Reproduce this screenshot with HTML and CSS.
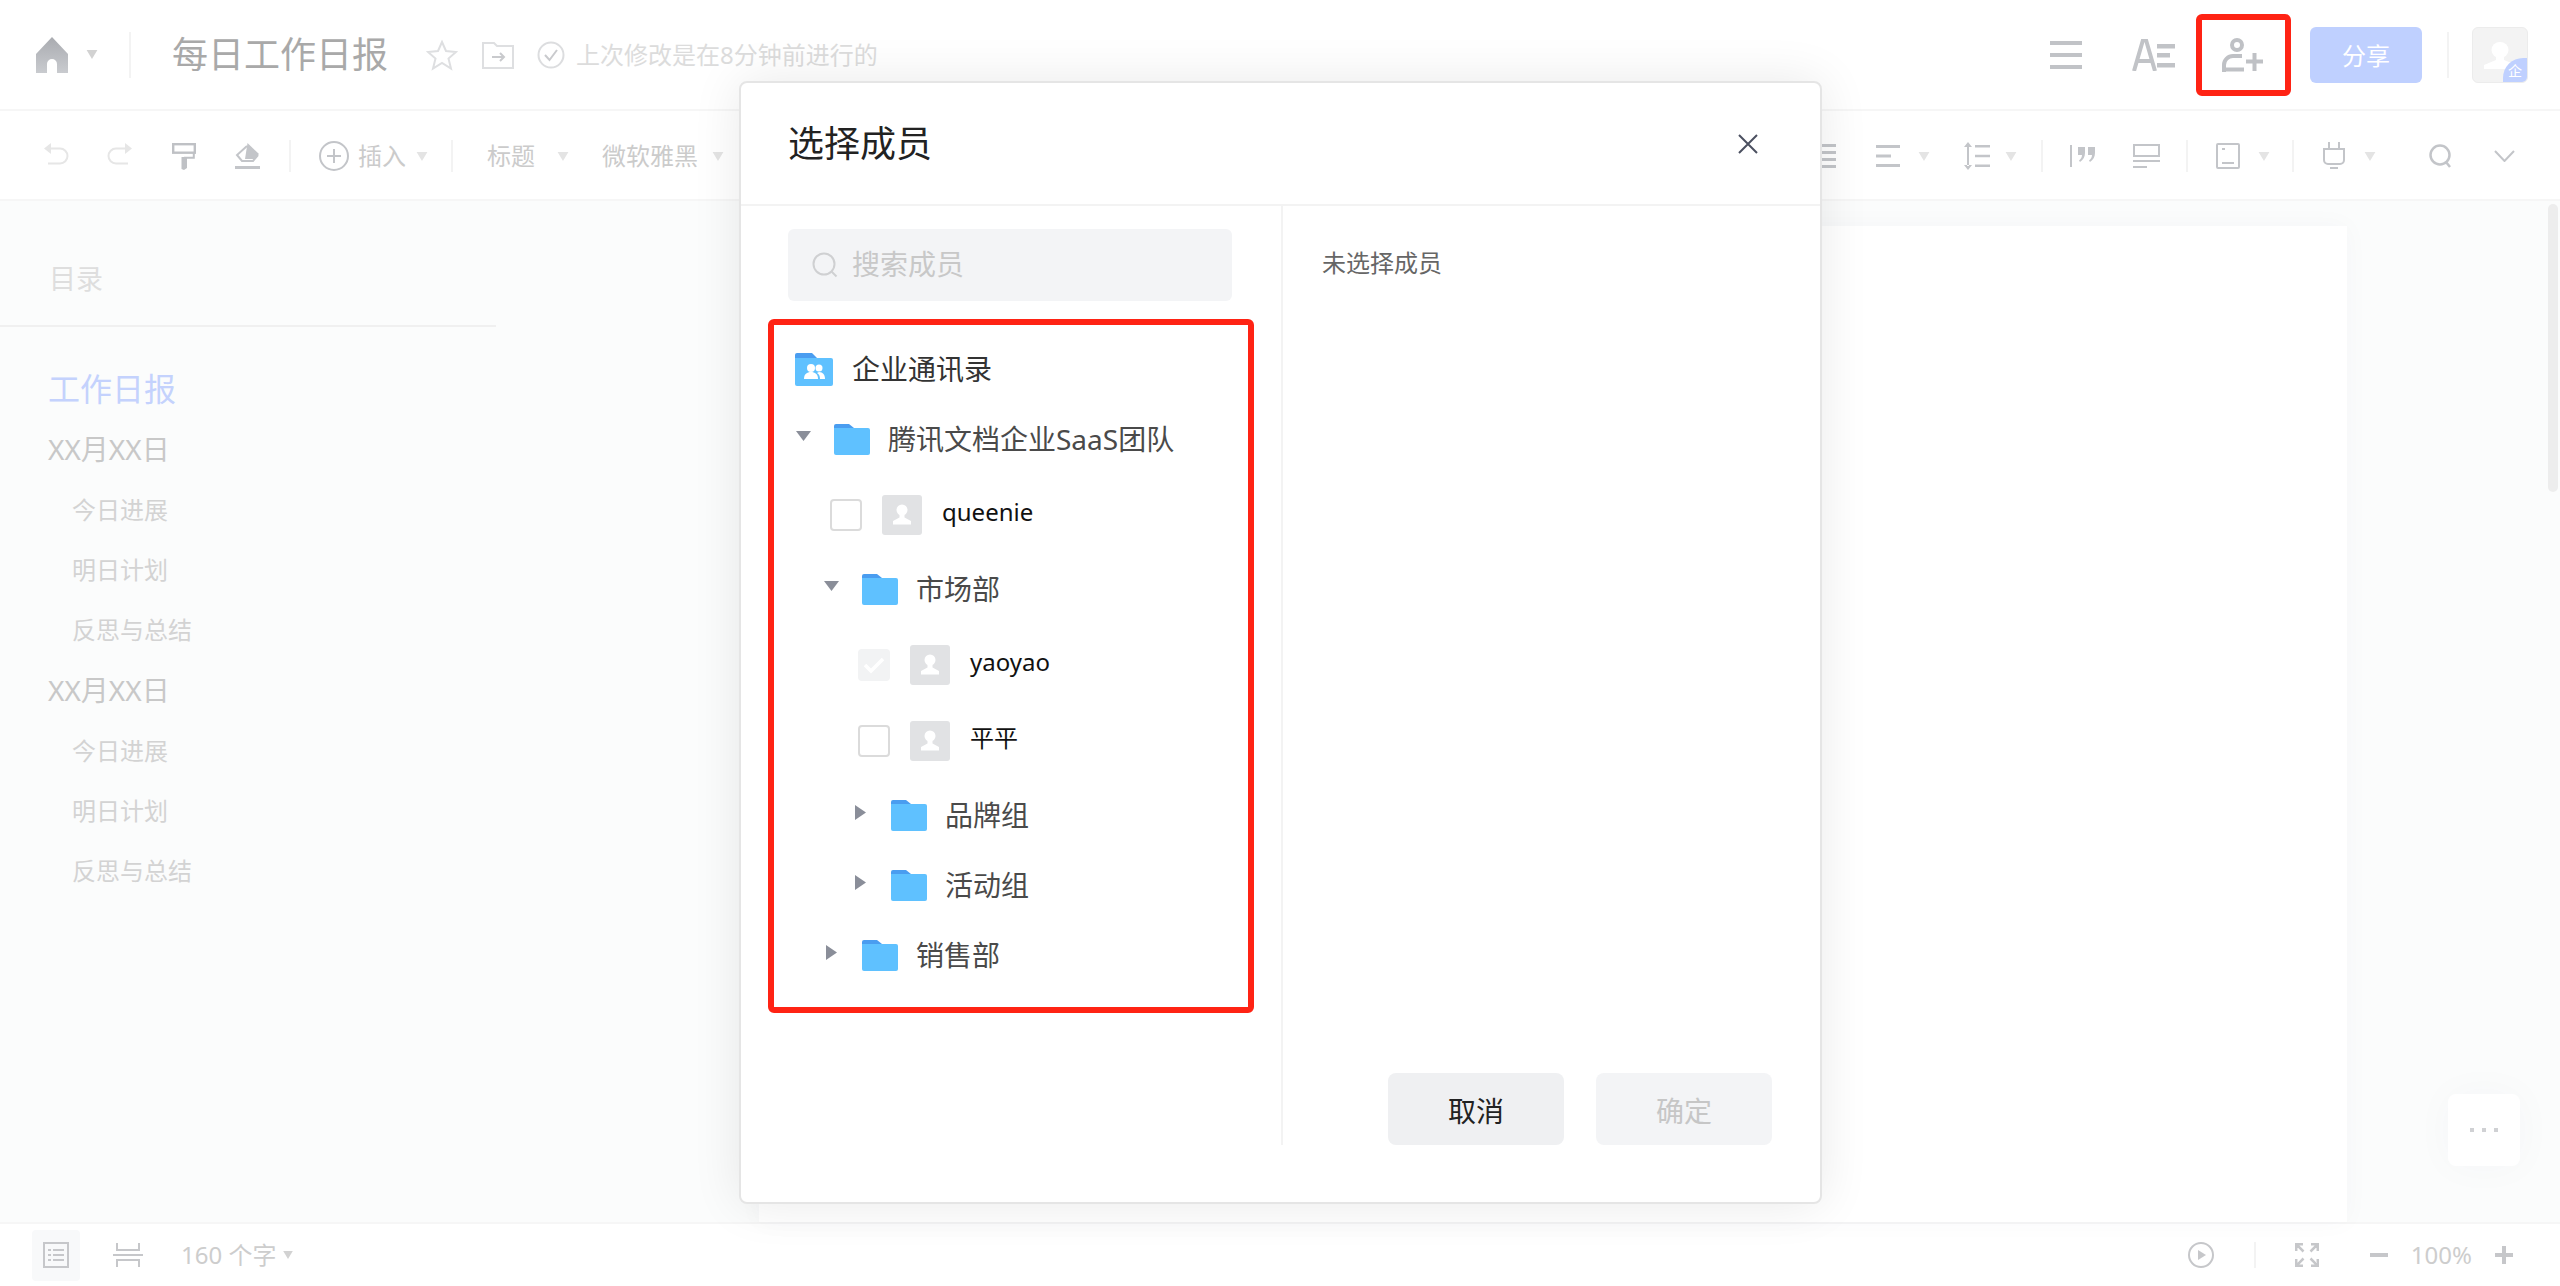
FILE: index.html
```html
<!DOCTYPE html>
<html lang="zh-CN">
  <head>
    <meta charset="UTF-8">
    <title>每日工作日报</title>
    <link rel="stylesheet" href="styles.css">
  </head>
  <body>
    <svg class="defs" width="0" height="0">
      <symbol id="folder" viewBox="0 0 36 31">
        <path fill="#4a9df0" d="M0 2a2 2 0 0 1 2-2h13l5 4H0z"/>
        <path fill="#5fc1ff" d="M0 4h34a2 2 0 0 1 2 2v23a2 2 0 0 1-2 2H2a2 2 0 0 1-2-2z"/>
      </symbol>
      <symbol id="person" viewBox="0 0 40 40">
        <circle cx="20" cy="15" r="5.5" fill="#fff"/>
        <path fill="#fff" d="M17.5 20h5v2.500l6.500 3.500v3.500H11V26l6.500-3.500z"/>
      </symbol>
      <symbol id="caret" viewBox="0 0 12 10">
        <path fill="currentColor" d="M0 0h12L6 10z"/>
      </symbol>
    </svg>

    <div class="app">
      <header class="topbar">
        <div class="row">
          <svg class="home" width="32" height="36" viewBox="0 0 32 36">
            <defs>
              <linearGradient id="homefill" x1="0" y1="0" x2="0" y2="1">
                <stop offset="0" stop-color="#a9abb0"/>
                <stop offset="1" stop-color="#c9cbcf"/>
              </linearGradient>
            </defs>
            <path fill="url(#homefill)" d="M16 0l16 17v19H21v-9a5 5 0 0 0-10 0v9H0V17z"/>
          </svg>
          <svg class="caret dark ml-18" width="12" height="9"><use href="#caret"/></svg>
          <span class="sep tall ml-31"></span>
          <h1 class="doc-title ml-41">每日工作日报</h1>
          <svg class="ml-38" width="32" height="32" viewBox="0 0 32 32">
            <path fill="none" stroke="#dedfe1" stroke-width="2" d="M16 3l4 9 10 1-7.500 6.500 2.500 10-9-5.500-9 5.500 2.500-10L2 13l10-1z"/>
          </svg>
          <svg class="ml-24" width="32" height="28" viewBox="0 0 32 28">
            <path fill="none" stroke="#dedfe1" stroke-width="2" d="M1 2h11l3 3h16v22H1z"/>
            <path fill="none" stroke="#c9cacd" stroke-width="2" d="M10 16h12M18 12l4 4-4 4"/>
          </svg>
          <svg class="ml-23" width="28" height="28" viewBox="0 0 28 28">
            <circle cx="14" cy="14" r="12.500" fill="none" stroke="#dcdddf" stroke-width="2"/>
            <path fill="none" stroke="#c9cacd" stroke-width="2" d="M8 14l4.500 5L20 9"/>
          </svg>
          <span class="save-note ml-11">上次修改是在8分钟前进行的</span>
        </div>
        <div class="row">
          <svg width="32" height="28" viewBox="0 0 32 28">
            <path fill="#c1c3c7" d="M0 0h32v4H0zM0 12h32v4H0zM0 24h32v4H0z"/>
          </svg>
          <svg class="ml-50" width="43" height="32" viewBox="0 0 43 32">
            <path fill="none" stroke="#c1c3c7" stroke-width="4" d="M2 32L11 1h3l9 31M5 22h15"/>
            <path fill="#c1c3c7" d="M25 5h18v4.500H25zM25 14h13v4.500H25zM25 24h18v4.500H25z"/>
          </svg>
          <svg class="ml-47" width="41" height="34" viewBox="0 0 41 34">
            <circle cx="15" cy="7" r="5" fill="none" stroke="#bfc1c5" stroke-width="4"/>
            <path fill="none" stroke="#bfc1c5" stroke-width="4" d="M2 34V27a9 9 0 0 1 9-9h9M2 31.500h20"/>
            <path fill="#bfc1c5" d="M24 21.500h17v4H24zM30.500 15h4v18h-4z"/>
          </svg>
          <button class="share ml-47">分享</button>
          <span class="sep tall ml-25"></span>
          <div class="me ml-23">
            <svg width="56" height="56" viewBox="0 0 56 56">
              <ellipse cx="28" cy="23" rx="8.500" ry="8" fill="#fff"/>
              <path fill="#fff" d="M24 29h8v4l12 5v4H12v-4l12-5z"/>
            </svg>
            <span class="me-badge">企</span>
          </div>
        </div>
      </header>

      <nav class="toolbar">
        <div class="row">
          <svg width="26" height="26" viewBox="0 0 26 26">
            <path fill="#e6e6e6" d="M8 0v11L1 5.500z"/>
            <path fill="none" stroke="#e6e6e6" stroke-width="2" d="M6 5.500h11a7.500 7.500 0 0 1 0 15H5"/>
          </svg>
          <svg class="ml-38" width="26" height="26" viewBox="0 0 26 26">
            <path fill="#e6e6e6" d="M18 0v11l7-5.500z"/>
            <path fill="none" stroke="#e6e6e6" stroke-width="2" d="M20 5.500H9a7.500 7.500 0 0 0 0 15h12"/>
          </svg>
          <svg class="ml-39" width="24" height="27" viewBox="0 0 24 27">
            <rect x="1.200" y="1.200" width="21.600" height="8.500" fill="none" stroke="#bfc1c5" stroke-width="2.400"/>
            <path fill="none" stroke="#bfc1c5" stroke-width="2" d="M21.800 9.700v5H12"/>
            <path fill="#bfc1c5" d="M9.500 14h5.500v11l-3 2-2.500-1z"/>
          </svg>
          <svg class="ml-39" width="25" height="26" viewBox="0 0 25 26">
            <path fill="#c3c5c9" d="M12.500 0L24 11l-5 5h-9z"/>
            <path fill="none" stroke="#c3c5c9" stroke-width="2" d="M12 3L2 12l5 6h11l5-6"/>
            <path fill="#c3c5c9" d="M0 23h25v3H0z"/>
          </svg>
          <span class="sep ml-29"></span>
          <svg class="ml-28" width="30" height="30" viewBox="0 0 30 30">
            <circle cx="15" cy="15" r="14" fill="none" stroke="#c3c5c9" stroke-width="2"/>
            <path fill="none" stroke="#c3c5c9" stroke-width="2" d="M15 8v14M8 15h14"/>
          </svg>
          <span class="tool-text ml-9">插入</span>
          <svg class="caret ml-10" width="12" height="9"><use href="#caret"/></svg>
          <span class="sep ml-23"></span>
          <span class="tool-text ml-34">标题</span>
          <svg class="caret ml-22" width="12" height="9"><use href="#caret"/></svg>
          <span class="tool-text ml-33">微软雅黑</span>
          <svg class="caret ml-14" width="12" height="9"><use href="#caret"/></svg>
        </div>
        <div class="row">
          <svg width="22" height="24" viewBox="0 0 22 24">
            <path fill="#c3c5c9" d="M0 0h22v3H0zM0 7h22v3H0zM0 14h22v3H0zM0 21h22v3H0z"/>
          </svg>
          <svg class="ml-40" width="24" height="22" viewBox="0 0 24 22">
            <path fill="#c3c5c9" d="M0 0h24v3H0zM0 9.500h15v3H0zM0 19h24v3H0z"/>
          </svg>
          <svg class="caret ml-18" width="12" height="9"><use href="#caret"/></svg>
          <svg class="ml-34" width="26" height="28" viewBox="0 0 26 28">
            <path fill="#c3c5c9" d="M4 0l4 5H0zM4 28l4-5H0zM3 4h2v20H3zM11 3h15v2.500H11zM11 12.800h15v2.500H11zM11 22.500h15v2.500H11z"/>
          </svg>
          <svg class="caret ml-15" width="12" height="9"><use href="#caret"/></svg>
          <span class="sep ml-24"></span>
          <svg class="ml-27" width="26" height="22" viewBox="0 0 26 22">
            <path fill="#c3c5c9" d="M0 0h2v22H0zM8 2h7v6c0 4-2 7-5 9l-1-1.500c2-1.500 3-3.500 3-5.500H8zM18 2h7v6c0 4-2 7-5 9l-1-1.500c2-1.500 3-3.500 3-5.500h-4z"/>
          </svg>
          <svg class="ml-37" width="27" height="24" viewBox="0 0 27 24">
            <path fill="none" stroke="#c3c5c9" stroke-width="2" d="M1 1h25v11H1z"/>
            <path fill="#c3c5c9" d="M0 16h27v2H0zM0 22h14v2H0z"/>
          </svg>
          <span class="sep ml-26"></span>
          <svg class="ml-28" width="24" height="26" viewBox="0 0 24 26">
            <rect x="1" y="1" width="22" height="24" rx="1" fill="none" stroke="#c3c5c9" stroke-width="2"/>
            <path fill="#c3c5c9" d="M6 19h12v2H6zM6 5h3v2H6z"/>
          </svg>
          <svg class="caret ml-18" width="12" height="9"><use href="#caret"/></svg>
          <span class="sep ml-22"></span>
          <svg class="ml-28" width="24" height="28" viewBox="0 0 24 28">
            <path fill="none" stroke="#c3c5c9" stroke-width="2" d="M7 0v7M17 0v7M2 7h20v11a4 4 0 0 1-4 4H6a4 4 0 0 1-4-4z"/>
            <path fill="#c3c5c9" d="M8 25h8v2H8z"/>
          </svg>
          <svg class="caret ml-18" width="12" height="9"><use href="#caret"/></svg>
          <svg class="ml-53" width="23" height="24" viewBox="0 0 23 24">
            <circle cx="11" cy="11" r="9.500" fill="none" stroke="#c3c5c9" stroke-width="2.500"/>
            <path fill="none" stroke="#c3c5c9" stroke-width="2.500" d="M17 18l4 5"/>
          </svg>
          <svg class="ml-42" width="21" height="12" viewBox="0 0 21 12">
            <path fill="none" stroke="#c3c5c9" stroke-width="2" d="M1 1l9.500 10L20 1"/>
          </svg>
        </div>
      </nav>

      <main class="workspace">
        <aside class="toc">
          <div class="toc-head">目录</div>
          <ul class="toc-list">
            <li class="toc-h1">工作日报</li>
            <li class="toc-h2">XX月XX日</li>
            <li class="toc-h3">今日进展</li>
            <li class="toc-h3">明日计划</li>
            <li class="toc-h3">反思与总结</li>
            <li class="toc-h2">XX月XX日</li>
            <li class="toc-h3">今日进展</li>
            <li class="toc-h3">明日计划</li>
            <li class="toc-h3">反思与总结</li>
          </ul>
        </aside>
        <section class="canvas">
          <div class="paper"></div>
        </section>
        <div class="scroll-thumb"></div>
        <div class="more-card">
          <span></span><span></span><span></span>
        </div>
      </main>

      <footer class="statusbar">
        <div class="row">
          <div class="outline-btn">
            <svg width="26" height="26" viewBox="0 0 26 26">
              <rect x="1" y="1" width="24" height="24" fill="none" stroke="#c6c7ca" stroke-width="2"/>
              <path fill="#c6c7ca" d="M5 7h3v2H5zM10 7h11v2H10zM5 12h3v2H5zM10 12h11v2H10zM5 17h3v2H5zM10 17h11v2H10z"/>
            </svg>
          </div>
          <svg class="ml-33" width="30" height="24" viewBox="0 0 30 24">
            <path fill="#c6c7ca" d="M3 0h2v6h20V0h2v8H3zM0 11h30v2H0zM3 16h24v8h-2v-6H5v6H3z"/>
          </svg>
          <span class="count ml-38">160 个字</span>
          <svg class="caret dark ml-6" width="12" height="8"><use href="#caret"/></svg>
        </div>
        <div class="row">
          <svg width="26" height="26" viewBox="0 0 26 26">
            <circle cx="13" cy="13" r="12" fill="none" stroke="#c6c7ca" stroke-width="2"/>
            <path fill="#c6c7ca" d="M10 8l8 5-8 5z"/>
          </svg>
          <span class="sep short ml-40"></span>
          <svg class="ml-39" width="24" height="24" viewBox="0 0 24 24">
            <path fill="none" stroke="#c6c7ca" stroke-width="2.500" d="M1.200 8V1.200H8M1.200 1.200l7.300 7.300M22.800 8V1.200H16M22.800 1.200l-7.300 7.300M1.200 16v6.800H8M1.200 22.800l7.300-7.300M22.800 16v6.800H16M22.800 22.800l-7.300-7.300"/>
          </svg>
          <svg class="ml-51" width="18" height="4"><rect width="18" height="4" fill="#c6c7ca"/></svg>
          <span class="count ml-23">100%</span>
          <svg class="ml-23" width="18" height="18" viewBox="0 0 18 18">
            <path fill="#c6c7ca" d="M0 7h18v4H0zM7 0h4v18H7z"/>
          </svg>
        </div>
      </footer>
    </div>

    <div class="dialog">
      <div class="dialog-head">
        <h2 class="dialog-title">选择成员</h2>
        <svg class="dialog-close" width="20" height="20" viewBox="0 0 20 20">
          <path fill="none" stroke="#4b5060" stroke-width="2" d="M1 1l18 18M19 1L1 19"/>
        </svg>
      </div>
      <div class="dialog-body">
        <div class="picker">
          <div class="search">
            <svg width="26" height="26" viewBox="0 0 26 26">
              <circle cx="12" cy="12" r="10.500" fill="none" stroke="#cfd0d2" stroke-width="2"/>
              <path fill="none" stroke="#cfd0d2" stroke-width="2" d="M19.500 19.500l5 5"/>
            </svg>
            <span>搜索成员</span>
          </div>
          <div class="tree">
            <div class="tree-mark"></div>
            <div class="tree-row root">
              <svg width="38" height="33" viewBox="0 0 38 33">
                <path fill="#4a9df0" d="M0 2a2 2 0 0 1 2-2h15l5 5H0z"/>
                <path fill="#5fc1ff" d="M0 5h36a2 2 0 0 1 2 2v24a2 2 0 0 1-2 2H2a2 2 0 0 1-2-2z"/>
                <circle cx="16" cy="15" r="4" fill="#fff"/>
                <path fill="#fff" d="M9 26c0-5 3-7 7-7s7 2 7 7z"/>
                <circle cx="24" cy="15" r="3.500" fill="#fff"/>
                <path fill="#fff" d="M24 19c4 0 6 3 6 7h-5c0-3-1-5-3-6z"/>
              </svg>
              <span class="root-label">企业通讯录</span>
            </div>
            <div class="tree-row level-1">
              <svg class="arrow" width="16" height="12" viewBox="0 0 16 12"><path fill="#8a8e99" d="M0 0h15L7.500 10z"/></svg>
              <svg width="36" height="31"><use href="#folder"/></svg>
              <span class="folder-label">腾讯文档企业SaaS团队</span>
            </div>
            <div class="members level-1">
              <div class="member">
                <span class="check"></span>
                <svg class="avatar" width="40" height="40"><use href="#person"/></svg>
                <span class="member-name">queenie</span>
              </div>
            </div>
            <div class="tree-row level-2">
              <svg class="arrow" width="16" height="12" viewBox="0 0 16 12"><path fill="#8a8e99" d="M0 0h15L7.500 10z"/></svg>
              <svg width="36" height="31"><use href="#folder"/></svg>
              <span class="folder-label">市场部</span>
            </div>
            <div class="members level-2">
              <div class="member">
                <span class="check checked">
                  <svg width="32" height="32" viewBox="0 0 32 32">
                    <path fill="none" stroke="#fff" stroke-width="3.500" d="M7 16l6 6 12-12"/>
                  </svg>
                </span>
                <svg class="avatar" width="40" height="40"><use href="#person"/></svg>
                <span class="member-name">yaoyao</span>
              </div>
              <div class="member">
                <span class="check"></span>
                <svg class="avatar" width="40" height="40"><use href="#person"/></svg>
                <span class="member-name">平平</span>
              </div>
            </div>
            <div class="tree-row level-3">
              <svg class="arrow side" width="16" height="16" viewBox="0 0 16 16"><path fill="#8a8e99" d="M2 0l11 7.500L2 15z"/></svg>
              <svg width="36" height="31"><use href="#folder"/></svg>
              <span class="folder-label">品牌组</span>
            </div>
            <div class="tree-row level-3">
              <svg class="arrow side" width="16" height="16" viewBox="0 0 16 16"><path fill="#8a8e99" d="M2 0l11 7.500L2 15z"/></svg>
              <svg width="36" height="31"><use href="#folder"/></svg>
              <span class="folder-label">活动组</span>
            </div>
            <div class="tree-row level-2">
              <svg class="arrow side" width="16" height="16" viewBox="0 0 16 16"><path fill="#8a8e99" d="M2 0l11 7.500L2 15z"/></svg>
              <svg width="36" height="31"><use href="#folder"/></svg>
              <span class="folder-label">销售部</span>
            </div>
          </div>
        </div>
        <div class="selected">
          <p class="none-selected">未选择成员</p>
          <div class="dialog-actions">
            <button class="btn">取消</button>
            <button class="btn disabled">确定</button>
          </div>
        </div>
      </div>
    </div>

    <div class="action-mark"></div>
  </body>
</html>
```

FILE: styles.css
```css
* {
  box-sizing: border-box;
}

html, body {
  margin: 0;
  height: 100%;
  overflow: hidden;
}

body {
  font-family: "Noto Sans", "Noto Sans CJK SC", sans-serif;
  line-height: 1;
  background: #fff;
}

h1, h2, p, ul {
  margin: 0;
  padding: 0;
  font-weight: 400;
}

button {
  font-family: inherit;
  border: 0;
  padding: 0;
}

svg {
  display: block;
  flex: none;
}

.defs {
  position: absolute;
}

.app {
  display: flex;
  flex-direction: column;
  height: 1286px;
}

.row {
  display: flex;
  align-items: center;
}

.caret {
  color: #e4e4e4;
}

.caret.dark {
  color: #d2d2d2;
}

/* spacing between toolbar items */
.ml-6 { margin-left: 6px; }
.ml-9 { margin-left: 9px; }
.ml-10 { margin-left: 10px; }
.ml-11 { margin-left: 11px; }
.ml-14 { margin-left: 14px; }
.ml-15 { margin-left: 15px; }
.ml-18 { margin-left: 18px; }
.ml-22 { margin-left: 22px; }
.ml-23 { margin-left: 23px; }
.ml-24 { margin-left: 24px; }
.ml-25 { margin-left: 25px; }
.ml-26 { margin-left: 26px; }
.ml-27 { margin-left: 27px; }
.ml-28 { margin-left: 28px; }
.ml-29 { margin-left: 29px; }
.ml-31 { margin-left: 31px; }
.ml-33 { margin-left: 33px; }
.ml-34 { margin-left: 34px; }
.ml-37 { margin-left: 37px; }
.ml-38 { margin-left: 38px; }
.ml-39 { margin-left: 39px; }
.ml-40 { margin-left: 40px; }
.ml-41 { margin-left: 41px; }
.ml-42 { margin-left: 42px; }
.ml-47 { margin-left: 47px; }
.ml-50 { margin-left: 50px; }
.ml-51 { margin-left: 51px; }
.ml-53 { margin-left: 53px; }

.sep {
  display: block;
  flex: none;
  width: 2px;
  height: 32px;
  background: #f3f3f3;
}

.sep.tall {
  height: 46px;
}

.sep.short {
  height: 26px;
}

/* top bar */
.topbar {
  display: flex;
  justify-content: space-between;
  align-items: center;
  height: 111px;
  padding: 0 32px 0 36px;
  border-bottom: 2px solid #f6f6f6;
}

.doc-title {
  font-size: 36px;
  color: #a9a9a9;
}

.save-note {
  font-size: 24px;
  color: #dcdcdc;
}

.share {
  width: 112px;
  height: 56px;
  border-radius: 6px;
  background: #bfd0ff;
  color: #fff;
  font-size: 24px;
}

.me {
  position: relative;
  width: 56px;
  height: 56px;
  border-radius: 6px;
  background: #f3f3f3;
  border: 1px solid #ececec;
  overflow: hidden;
}

.me svg {
  margin: -1px;
}

.me-badge {
  position: absolute;
  right: 0;
  bottom: 0;
  width: 24px;
  height: 24px;
  padding: 6px 0 0 5px;
  border-top-left-radius: 20px;
  background: #bfd0ff;
  color: #fff;
  font-size: 14px;
}

/* format bar */
.toolbar {
  display: flex;
  justify-content: space-between;
  align-items: center;
  height: 90px;
  padding: 2px 45px 0 43px;
  border-bottom: 2px solid #f6f6f6;
}

.tool-text {
  font-size: 24px;
  color: #cbcbcb;
}

/* outline + document */
.workspace {
  position: relative;
  display: flex;
  flex: 1;
  min-height: 0;
  background: #fbfcfc;
}

.toc {
  flex: none;
  width: 496px;
}

.toc-head {
  display: flex;
  align-items: center;
  height: 126px;
  padding: 30px 0 0 49px;
  border-bottom: 2px solid #f0f0f0;
  font-size: 27px;
  color: #dedede;
}

.toc-list {
  list-style: none;
  padding: 32px 0 0 48px;
}

.toc-h1 {
  height: 60px;
  line-height: 60px;
  font-size: 32px;
  color: #c4d2fd;
}

.toc-h2 {
  height: 61px;
  line-height: 61px;
  font-size: 28px;
  color: #c8c8c8;
}

.toc-h3 {
  height: 60px;
  line-height: 60px;
  padding-left: 24px;
  font-size: 24px;
  color: #d3d3d3;
}

.canvas {
  flex: 1;
  padding: 25px 0 0 263px;
}

.paper {
  width: 1588px;
  height: 100%;
  background: #fff;
  box-shadow: 0 0 24px rgba(40, 50, 90, 0.03);
}

.scroll-thumb {
  position: absolute;
  top: 3px;
  right: 2px;
  width: 10px;
  height: 288px;
  border-radius: 5px;
  background: #ededed;
}

.more-card {
  position: absolute;
  right: 40px;
  bottom: 56px;
  display: flex;
  justify-content: center;
  align-items: center;
  gap: 8px;
  width: 72px;
  height: 72px;
  border-radius: 8px;
  background: #fff;
  box-shadow: 0 0 40px rgba(40, 50, 90, 0.03);
}

.more-card span {
  width: 4px;
  height: 4px;
  background: #d0d1d4;
}

/* status bar */
.statusbar {
  display: flex;
  justify-content: space-between;
  align-items: center;
  flex: none;
  height: 64px;
  padding: 0 47px 0 32px;
  border-top: 2px solid #f6f6f6;
  background: #fff;
}

.outline-btn {
  display: flex;
  justify-content: center;
  align-items: center;
  width: 48px;
  height: 51px;
  border-radius: 4px;
  background: #f8f9fa;
}

.count {
  font-size: 24px;
  color: #cdcdcd;
}

/* member dialog */
.dialog {
  position: absolute;
  top: 81px;
  left: 739px;
  width: 1083px;
  height: 1123px;
  border: 2px solid #e5e5e5;
  border-radius: 8px;
  background: #fff;
  box-shadow: 0 0 50px rgba(0, 0, 0, 0.09);
}

.dialog-head {
  display: flex;
  justify-content: space-between;
  align-items: center;
  height: 123px;
  padding: 0 62px 0 47px;
  border-bottom: 2px solid #f3f3f3;
}

.dialog-title {
  font-size: 36px;
  color: #222;
}

.dialog-body {
  display: flex;
  height: 939px;
}

.picker {
  flex: none;
  width: 542px;
  padding: 23px 0 0 47px;
  border-right: 2px solid #f3f3f3;
}

.search {
  display: flex;
  align-items: center;
  gap: 14px;
  width: 444px;
  height: 72px;
  padding-left: 24px;
  border-radius: 6px;
  background: #f3f4f6;
  font-size: 28px;
  color: #c8c8c8;
}

.search span {
  margin-top: -2px;
}

.tree {
  position: relative;
  margin-top: 33px;
}

.tree-mark {
  position: absolute;
  top: -15px;
  left: -20px;
  width: 486px;
  height: 694px;
  border: 6px solid #ff2314;
  border-radius: 6px;
}

.tree-row {
  display: flex;
  align-items: center;
  height: 70px;
  font-size: 28px;
}

.tree-row.root {
  padding-left: 7px;
}

.tree-row.level-1 { padding-left: 8px; }
.tree-row.level-2 { padding-left: 36px; }
.tree-row.level-3 { padding-left: 65px; }

.arrow {
  width: 16px;
  margin: -5px 22px 0 0;
}

.root-label {
  margin-left: 19px;
  color: #333;
}

.folder-label {
  margin-left: 18px;
  color: #4a4a4a;
}

.members {
  padding: 3px 0 1px;
}

.members.level-1 { padding-left: 42px; }
.members.level-2 { padding-left: 70px; }

.member {
  display: flex;
  align-items: center;
  height: 76px;
}

.check {
  flex: none;
  width: 32px;
  height: 32px;
  border: 2px solid #dbdbdb;
  border-radius: 4px;
  background: #fff;
}

.check.checked {
  border: 0;
  background: #f2f3f4;
}

.avatar {
  margin-left: 20px;
  border-radius: 3px;
  background: #e1e2e4;
}

.member-name {
  margin: -6px 0 0 20px;
  font-size: 24px;
  color: #111;
}

.selected {
  flex: 1;
  display: flex;
  flex-direction: column;
  justify-content: space-between;
  padding: 45px 48px 0 39px;
}

.none-selected {
  font-size: 24px;
  color: #666;
}

.dialog-actions {
  display: flex;
  justify-content: flex-end;
  gap: 32px;
}

.btn {
  width: 176px;
  height: 72px;
  padding-top: 2px;
  border-radius: 8px;
  background: #eff0f2;
  font-size: 28px;
  color: #222;
}

.btn.disabled {
  background: #f3f4f6;
  color: #c6c6c6;
}

/* annotation round the invite button */
.action-mark {
  position: absolute;
  top: 14px;
  left: 2196px;
  width: 95px;
  height: 82px;
  border: 6px solid #ff2314;
  border-radius: 6px;
}
```
